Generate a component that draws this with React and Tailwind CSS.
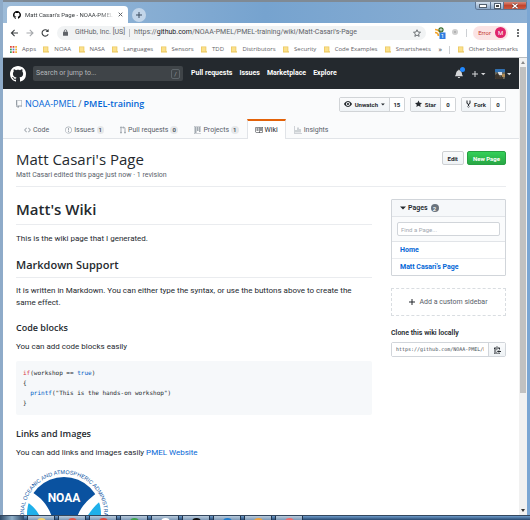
import React from "react";

const PATHS = {
  mark: [16, "M8 0C3.58 0 0 3.58 0 8c0 3.54 2.29 6.53 5.47 7.59.4.07.55-.17.55-.38 0-.19-.01-.82-.01-1.49-2.01.37-2.53-.49-2.69-.94-.09-.23-.48-.94-.82-1.13-.28-.15-.68-.52-.01-.53.63-.01 1.08.58 1.23.82.72 1.21 1.87.87 2.33.66.07-.52.28-.87.51-1.07-1.78-.2-3.64-.89-3.64-3.95 0-.87.31-1.59.82-2.15-.08-.2-.36-1.02.08-2.12 0 0 .67-.21 2.2.82.64-.18 1.32-.27 2-.27.68 0 1.36.09 2 .27 1.53-1.04 2.2-.82 2.2-.82.44 1.1.16 1.92.08 2.12.51.56.82 1.27.82 2.15 0 3.07-1.87 3.75-3.65 3.95.29.25.54.73.54 1.48 0 1.07-.01 1.93-.01 2.2 0 .21.15.46.55.38A8.013 8.013 0 0 0 16 8c0-4.42-3.58-8-8-8z"],
  star: [14, "M14 6l-4.9-.64L7 1 4.9 5.36 0 6l3.6 3.26L2.67 14 7 11.67 11.33 14l-.93-4.74L14 6z"],
  fork: [10, "M8 1a1.993 1.993 0 0 0-1 3.72V6L5 8 3 6V4.72A1.993 1.993 0 0 0 2 1a1.993 1.993 0 0 0-1 3.72V6.5l3 3v1.78A1.993 1.993 0 0 0 5 15a1.993 1.993 0 0 0 1-3.72V9.5l3-3V4.72A1.993 1.993 0 0 0 8 1zM2 4.2C1.34 4.2.8 3.65.8 3c0-.65.55-1.2 1.2-1.2.65 0 1.2.55 1.2 1.2 0 .65-.55 1.2-1.2 1.2zm3 10c-.66 0-1.2-.55-1.2-1.2 0-.65.55-1.2 1.2-1.2.65 0 1.2.55 1.2 1.2 0 .65-.55 1.2-1.2 1.2zm3-10c-.66 0-1.2-.55-1.2-1.2 0-.65.55-1.2 1.2-1.2.65 0 1.2.55 1.2 1.2 0 .65-.55 1.2-1.2 1.2z"],
  code: [14, "M9.5 3L8 4.5 11.5 8 8 11.5 9.5 13 14 8 9.5 3zm-5 0L0 8l4.5 5L6 11.5 2.5 8 6 4.5 4.5 3z"],
  issue: [14, "M7 2.3c3.14 0 5.7 2.56 5.7 5.7s-2.56 5.7-5.7 5.7A5.71 5.71 0 0 1 1.3 8c0-3.14 2.56-5.7 5.7-5.7zM7 1C3.14 1 0 4.14 0 8s3.14 7 7 7 7-3.14 7-7-3.14-7-7-7zm1 3H6v5h2V4zm0 6H6v2h2v-2z"],
  pull: [12, "M11 11.28V5c-.03-.78-.34-1.47-.94-2.06C9.46 2.35 8.78 2.03 8 2H7V0L4 3l3 3V4h1c.27.02.48.11.69.31.21.2.3.42.31.69v6.28A1.993 1.993 0 0 0 10 15a1.993 1.993 0 0 0 1-3.72zM4 3c0-1.11-.89-2-2-2a1.993 1.993 0 0 0-1 3.72v6.56A1.993 1.993 0 0 0 2 15a1.993 1.993 0 0 0 1-3.72V4.72c.59-.34 1-.98 1-1.72z"],
  project: [15, "M10 12h3V2h-3v10zm-4-2h3V2H6v8zm-4 4h3V2H2v12zm-1 1h13V1H1v14zM14 0H1a1 1 0 0 0-1 1v14a1 1 0 0 0 1 1h13a1 1 0 0 0 1-1V1a1 1 0 0 0-1-1z"],
  book: [16, "M3 5h4v1H3V5zm0 3h4V7H3v1zm0 2h4V9H3v1zm11-5h-4v1h4V5zm0 2h-4v1h4V7zm0 2h-4v1h4V9zm2-6v9c0 .55-.45 1-1 1H9.5l-1 1-1-1H2c-.55 0-1-.45-1-1V3c0-.55.45-1 1-1h5.5l1 1 1-1H15c.55 0 1 .45 1 1zm-8 .5L7.5 3H2v9h6V3.5zm7-.5H9.5l-.5.5V12h6V3z"],
  graph: [16, "M16 14v1H0V0h1v14h15zM5 13H3V8h2v5zm4 0H7V3h2v10zm4 0h-2V6h2v7z"],
  eye: [16, "M8.06 2C3 2 0 8 0 8s3 6 8.06 6C13 14 16 8 16 8s-3-6-7.94-6zM8 12c-2.2 0-4-1.78-4-4 0-2.2 1.8-4 4-4 2.22 0 4 1.8 4 4 0 2.22-1.78 4-4 4zm2-4c0 1.11-.89 2-2 2-1.11 0-2-.89-2-2 0-1.11.89-2 2-2 1.11 0 2 .89 2 2z"],
  repo: [12, "M4 9H3V8h1v1zm0-3H3v1h1V6zm0-2H3v1h1V4zm0-2H3v1h1V2zm8-1v12c0 .55-.45 1-1 1H6v2l-1.5-1.5L3 16v-2H1c-.55 0-1-.45-1-1V1c0-.55.45-1 1-1h10c.55 0 1 .45 1 1zm-1 10H1v2h2v-1h3v1h5v-2zm0-10H2v9h9V1z"],
  clippy: [14, "M2 13h4v1H2v-1zm5-6H2v1h5V7zm2 3V8l-3 3 3 3v-2h5v-2H9zM4.5 9H2v1h2.5V9zM2 12h2.5v-1H2v1zm9 1h1v2c-.02.28-.11.52-.3.7-.19.18-.42.28-.7.3H1c-.55 0-1-.45-1-1V4c0-.55.45-1 1-1h3c0-1.11.89-2 2-2 1.11 0 2 .89 2 2h3c.55 0 1 .45 1 1v5h-1V6H1v9h10v-2zM2 5h8c0-.55-.45-1-1-1H8c-.55 0-1-.45-1-1s-.45-1-1-1-1 .45-1 1-.45 1-1 1H3c-.55 0-1 .45-1 1z"],
  bell: [14, "M14 12v1H0v-1l.73-.58c.77-.77.81-2.55 1.19-4.42C2.69 3.23 6 2 6 2c0-.55.45-1 1-1s1 .45 1 1c0 0 3.39 1.23 4.16 5 .38 1.88.42 3.66 1.19 4.42l.66.58H14zm-7 4c1.11 0 2-.89 2-2H5c0 1.11.89 2 2 2z"],
  plus: [12, "M12 9H7v5H5V9H0V7h5V2h2v5h5v2z"],
  caret: [12, "M0 5l6 6 6-6z"],
};

function Octicon({ name, className = "h-2" }) {
  const [width, d] = PATHS[name];
  return (
    <svg viewBox={`0 0 ${width} 16`} className={`shrink-0 w-auto ${className}`} fill="currentColor" aria-hidden="true">
      <path fillRule="evenodd" d={d} />
    </svg>
  );
}

function WindowControls() {
  return (
    <div className="flex h-[8px] w-[52px] overflow-hidden rounded-b-[3px] border border-t-0 border-[#5d7593]">
      <button aria-label="Minimize" className="flex w-[15px] items-end justify-center border-r border-[#5d7593] bg-linear-to-b from-[#d3e0ee] to-[#8ba7c6] pb-[2px]">
        <span className="h-[2px] w-[6px] bg-white outline outline-[#52606f]" />
      </button>
      <button aria-label="Restore" className="flex w-[13px] items-center justify-center border-r border-[#5d7593] bg-linear-to-b from-[#d3e0ee] to-[#8ba7c6]">
        <span className="h-[4px] w-[5px] border border-white bg-[#444] outline outline-[#52606f]" />
      </button>
      <button aria-label="Close" className="flex grow items-center justify-center bg-linear-to-b from-[#d78b7b] via-[#c2442c] to-[#c75842]">
        <svg viewBox="0 0 8 6" className="h-[6px] w-[8px]">
          <path d="M1.5 .8l5 4.4M6.5 .8l-5 4.4" stroke="#5b2a26" strokeWidth="2.4" />
          <path d="M1.5 .8l5 4.4M6.5 .8l-5 4.4" stroke="#fff" strokeWidth="1.4" />
        </svg>
      </button>
    </div>
  );
}

function TitleBar() {
  return (
    <div className="flex h-[23px] shrink-0 items-start justify-between border-t-2 border-[#7f8a95] bg-linear-to-r from-[#9dbbd8] via-[#76a3cf] to-[#8db0d4] pl-[4px]">
      <div className="flex h-full items-end">
        <div className="flex h-[17px] w-[121px] items-center gap-[4px] rounded-t-[4px] bg-white pr-[5px] pl-[6px] text-[6px] text-[#3c4043]">
          <Octicon name="mark" className="h-[8px] text-black" />
          <span className="min-w-0 grow whitespace-nowrap mask-r-from-85%">Matt Casari's Page - NOAA-PMEL</span>
          <svg viewBox="0 0 6 6" className="h-[5px] w-[5px] shrink-0">
            <path d="M.8.8l4.4 4.4M5.2.8L.8 5.2" stroke="#5f6368" strokeWidth="1.2" />
          </svg>
        </div>
        <button aria-label="New tab" className="mb-px ml-[4px] flex size-[14px] items-center justify-center rounded-full bg-[#c3d6ea] text-[#3c4d60]">
          <Octicon name="plus" className="h-[8px]" />
        </button>
      </div>
      <WindowControls />
    </div>
  );
}

function Toolbar() {
  return (
    <div className="flex h-[19px] shrink-0 items-center bg-white pr-[8px] pl-[7px] text-[7px] text-[#5f6368]">
      <svg viewBox="0 0 40 10" className="mr-[7px] h-[10px] w-[40px] shrink-0" fill="none" strokeWidth="1.1">
        <path d="M8 5H1.5M4.6 1.8L1.4 5l3.2 3.2" stroke="#3c4043" />
        <path d="M16.500 5H23M19.800 1.800L23 5l-3.200 3.200" stroke="#a5a8ac" />
        <path d="M38 3.200A3.200 3.200 0 1 0 38.200 6.200" stroke="#3c4043" />
        <path d="M38.600 1v3h-3z" fill="#3c4043" />
      </svg>
      <div className="flex h-[14px] grow items-center rounded-full bg-[#f1f3f4] pr-[5px] pl-[6px] whitespace-nowrap">
        <svg viewBox="0 0 6 8" className="mr-[7px] h-[7px] w-[5px]">
          <path d="M1.500 4V2.200a1.500 1.500 0 0 1 3 0V4" stroke="#5f6368" fill="none" />
          <rect y="3" width="6" height="5" rx=".6" fill="#5f6368" />
        </svg>
        <span>GitHub, Inc. [US]</span>
        <span className="mx-[4px] h-[8px] w-px bg-[#bdc1c6]" />
        <span>https://<span className="text-[#202124]">github.com</span>/NOAA-PMEL/PMEL-training/wiki/Matt-Casari's-Page</span>
        <svg viewBox="0 0 16 16" className="ml-auto h-[8px] w-[8px]" fill="none" stroke="#5f6368" strokeWidth="1.800">
          <path d="M8 1.500l2 4.500 5 .5-3.800 3.300 1.100 4.900L8 12.200l-4.300 2.500 1.100-4.900L1 6.500 6 6z" />
        </svg>
      </div>
      <svg viewBox="0 0 26 12" className="ml-[8px] h-[12px] w-[26px] shrink-0">
        <path d="M1 2.500a6 6 0 0 1 6 6.500M1 5.500a3.500 3.500 0 0 1 3.400 3.500" stroke="#f3a52c" strokeWidth="1.700" fill="none" />
        <circle cx="7" cy="2.800" r="2.600" fill="#356a2c" />
        <path d="M7 1.200v3.200M5.400 2.800h3.200" stroke="#fff" strokeWidth=".8" />
        <rect x="5.500" y="5.500" width="6" height="6.500" fill="#2f7de1" />
        <text x="8.500" y="11" fontSize="6" textAnchor="middle" fill="#fff">1</text>
        <circle cx="21" cy="5" r="3" fill="#d0d0d0" />
        <circle cx="21" cy="5" r="1" fill="#aaa" />
      </svg>
      <span className="mx-[6px] h-[8px] w-px bg-[#cdd0d4]" />
      <button className="flex h-[14px] items-center gap-[4px] rounded-full bg-[#fbe3e4] pr-[2px] pl-[5px] text-[6px] text-[#c5352f]">
        Error
        <span className="flex size-[11px] items-center justify-center rounded-full bg-[#e0256b] text-[6px] text-white">M</span>
      </button>
      <button aria-label="Menu" className="ml-[9px] flex flex-col gap-px">
        <span className="size-[2px] rounded-full bg-[#3c4043]" />
        <span className="size-[2px] rounded-full bg-[#3c4043]" />
        <span className="size-[2px] rounded-full bg-[#3c4043]" />
      </button>
    </div>
  );
}

function Folder() {
  return (
    <svg viewBox="0 0 7 7" className="h-[7px] w-[6px] shrink-0">
      <path d="M0 0h6.200v5L7 6v1H0z" fill="#e9c55a" />
      <path d="M.8.8h4.600v5H.8z" fill="#fbe08a" />
    </svg>
  );
}

const BOOKMARKS = ["NOAA", "NASA", "Languages", "Sensors", "TDD", "Distributors", "Security", "Code Examples", "Smartsheets"];
const DOTS = ["#e0453a", "#e0453a", "#f0b23a", "#3f9b53", "#4a86e8", "#f0b23a", "#3f9b53", "#e0453a", "#f0b23a"];

function BookmarksBar() {
  return (
    <div className="flex h-[16px] shrink-0 items-center justify-between border-b border-[#b9bcbf] bg-white pr-[9px] pl-[7px] text-[6px] whitespace-nowrap text-[#5f6368]">
      <a href="#apps" className="flex items-center gap-[5px] font-['Open_Sans',sans-serif]">
        <svg viewBox="0 0 8 8" className="size-[7px]">
          {DOTS.map((fill, i) => (
            <rect key={i} x={(i % 3) * 3} y={Math.floor(i / 3) * 3} width="2" height="2" fill={fill} />
          ))}
        </svg>
        Apps
      </a>
      {BOOKMARKS.map((name) => (
        <a key={name} href="#bookmark" className="flex items-center gap-[5px] font-['Open_Sans',sans-serif]">
          <Folder />
          {name}
        </a>
      ))}
      <button aria-label="More bookmarks" className="text-[8px]">»</button>
      <span className="h-[8px] w-px bg-[#cdd0d4]" />
      <a href="#other" className="flex items-center gap-[5px] font-['Open_Sans',sans-serif]">
        <Folder />
        Other bookmarks
      </a>
    </div>
  );
}

function SiteHeader() {
  return (
    <header className="flex h-[31px] shrink-0 items-center bg-[#24292e] pr-[8px] pl-[7px] text-[7px] font-bold text-white">
      <a href="#home" aria-label="Homepage">
        <Octicon name="mark" className="h-[16px]" />
      </a>
      <label className="mr-[8px] ml-[7px] flex h-[15px] w-[150px] items-center rounded-[2px] bg-[#3f4448] px-[3px]">
        <input aria-label="Search" placeholder="Search or jump to..." className="min-w-0 grow bg-transparent font-normal outline-none placeholder:text-[#b4b7b9]" />
        <span className="flex h-[10px] w-[9px] items-center justify-center rounded-[2px] border border-[#5f666b] text-[6px] font-normal text-[#a0a4a8]">/</span>
      </label>
      <nav className="flex gap-[7px] whitespace-nowrap">
        <a href="#pulls">Pull requests</a>
        <a href="#issues">Issues</a>
        <a href="#marketplace">Marketplace</a>
        <a href="#explore">Explore</a>
      </nav>
      <div className="ml-auto flex items-center text-[#d5d7d9]">
        <button aria-label="Notifications" className="relative mr-[9px]">
          <Octicon name="bell" className="h-[9px]" />
          <span className="absolute -top-[2px] -right-[2px] size-[5px] rounded-full bg-[#2188ff]" />
        </button>
        <button aria-label="Create new" className="mr-[9px] flex items-center gap-[3px]">
          <Octicon name="plus" className="h-[8px]" />
          <Octicon name="caret" className="h-[6px]" />
        </button>
        <button aria-label="Profile" className="flex items-center gap-[2px]">
          <svg viewBox="0 0 10 10" className="size-[10px] rounded-[1px]">
            <path d="M0 0h10v10H0z" fill="#6c6a5c" />
            <path d="M0 0h10v3L5 4 0 3z" fill="#2f6fb0" />
            <path d="M3 3h4v3H3z" fill="#d9dcdf" />
            <path d="M0 6l3-2 2 4 3-2v4H0z" fill="#3c352c" />
            <path d="M7 5h3v3H7z" fill="#b08a54" />
          </svg>
          <Octicon name="caret" className="h-[6px]" />
        </button>
      </div>
    </header>
  );
}

function SocialButton({ icon, label, count, caret }) {
  return (
    <li className="flex h-[15px] rounded-[2px] border border-[#d1d4d7] text-[6px] font-bold text-[#24292e]">
      <button className="flex items-center gap-[3px] bg-linear-to-b from-[#fafbfc] to-[#eff3f6] px-[4px]">
        <Octicon name={icon} />
        {label}
        {caret && <Octicon name="caret" className="h-[5px]" />}
      </button>
      <a href="#count" className="flex w-[15px] items-center justify-center border-l border-[#d1d4d7] bg-white">{count}</a>
    </li>
  );
}

function Tab({ icon, label, count, active }) {
  const base = "flex h-[20px] items-center gap-[2px] border-x border-t-2 px-[7px] ";
  return (
    <a
      href="#tab"
      className={base + (active ? "border-x-[#e1e4e8] border-t-[#e36209] bg-white text-[#24292e]" : "border-transparent text-[#586069]")}
    >
      <Octicon name={icon} className={active ? "h-[8px] text-[#24292e]" : "h-[8px] text-[#a3aab1]"} />
      {label}
      {count && <span className="rounded-full bg-[#e6e8ea] px-[2px] text-[6px] leading-[8px] font-semibold text-[#444d56]">{count}</span>}
    </a>
  );
}

function RepoHead() {
  return (
    <div className="h-[50px] shrink-0 border-b border-[#e1e4e8] bg-[#fafbfc] px-[13px]">
      <div className="flex h-[30px] items-center justify-between">
        <h1 className="flex items-center gap-[2px] font-['Open_Sans',sans-serif] text-[9px] whitespace-nowrap text-[#586069]">
          <Octicon name="repo" className="mr-px h-[8px] text-[#959da5]" />
          <a href="#owner" className="text-[#0366d6]">NOAA-PMEL</a>
          <span>/</span>
          <a href="#repo" className="font-semibold text-[#0366d6]">PMEL-training</a>
        </h1>
        <ul className="flex gap-[5px]">
          <SocialButton icon="eye" label="Unwatch" count="15" caret />
          <SocialButton icon="star" label="Star" count="0" />
          <SocialButton icon="fork" label="Fork" count="0" />
        </ul>
      </div>
      <nav className="flex text-[7px] whitespace-nowrap">
        <Tab icon="code" label="Code" />
        <Tab icon="issue" label="Issues" count="1" />
        <Tab icon="pull" label="Pull requests" count="0" />
        <Tab icon="project" label="Projects" count="1" />
        <Tab icon="book" label="Wiki" active />
        <Tab icon="graph" label="Insights" />
      </nav>
    </div>
  );
}

function NoaaLogo() {
  return (
    <svg viewBox="0 0 92 92" className="mt-[10px] ml-[2px] size-[92px]" role="img" aria-label="NOAA logo">
      <defs>
        <clipPath id="disk"><circle cx="46" cy="45" r="37" /></clipPath>
        <path id="ring" d="M46 85a40 40 0 1 1 .1 0" />
      </defs>
      <g clipPath="url(#disk)">
        <path d="M0 0h92v92H0z" fill="#fff" />
        <path d="M0 30c14 3 20 12 25 24v38H0z" fill="#1fb0ea" />
        <path d="M92 26c-12 6-22 17-27 30v36h27z" fill="#1fb0ea" />
        <path d="M12 22c10 6 17 12 22 26l4 10h18c4-16 9-24 23-34L70 0H20z" fill="#0a52a0" />
      </g>
      <text x="46" y="33" textAnchor="middle" fontSize="12" fontWeight="700" fill="#fff" fontFamily="Roboto, sans-serif">NOAA</text>
      <text fontSize="5.5" fill="#0a52a0" fontFamily="'Liberation Sans', sans-serif">
        <textPath href="#ring" startOffset="50%" textAnchor="middle">NATIONAL OCEANIC AND ATMOSPHERIC ADMINISTRATION</textPath>
      </text>
    </svg>
  );
}

const HEADING = "font-['Open_Sans',sans-serif] font-semibold ";

function Article() {
  return (
    <article className="min-w-0 grow text-[8px] leading-[12px] text-[#24292e]">
      <h1 className={HEADING + "border-b border-[#eaecef] pb-[4px] text-[15px] leading-[21px]"}>Matt's Wiki</h1>
      <p className="mt-[8px]">This is the wiki page that I generated.</p>
      <h2 className={HEADING + "mt-[12px] border-b border-[#eaecef] pb-[4px] text-[11px] leading-[16px]"}>Markdown Support</h2>
      <p className="mt-[7px]">It is written in Markdown. You can either type the syntax, or use the buttons above to create the same effect.</p>
      <h3 className={HEADING + "mt-[12px] text-[9px] leading-[13px]"}>Code blocks</h3>
      <p className="mt-[7px]">You can add code blocks easily</p>
      <pre className="mt-[8px] rounded-[2px] bg-[#f6f8fa] p-[7px] font-['DejaVu_Sans_Mono',monospace] text-[6px] leading-[10px]">
        <code className="font-['DejaVu_Sans_Mono',monospace]">
          <span className="text-[#d73a49]">if</span>(workshop == <span className="text-[#005cc5]">true</span>){"\n{\n  "}
          <span className="text-[#005cc5]">printf</span>("This is the hands-on workshop"){"\n}"}
        </code>
      </pre>
      <h3 className={HEADING + "mt-[12px] text-[9px] leading-[13px]"}>Links and Images</h3>
      <p className="mt-[7px]">You can add links and images easily <a href="#pmel" className="text-[#0366d6]">PMEL Website</a></p>
      <NoaaLogo />
    </article>
  );
}

function Sidebar() {
  return (
    <aside className="w-[115px] shrink-0 text-[7px] text-[#24292e]">
      <section className="rounded-[1px] border border-[#d1d5da]">
        <h2 className="flex h-[17px] items-center gap-[2px] border-b border-[#e1e4e8] bg-[#f6f8fa] px-[8px] font-semibold">
          <Octicon name="caret" className="h-[8px]" />
          Pages
          <span className="ml-px flex size-[8px] items-center justify-center rounded-full bg-[#6a737d] text-[6px] text-white">2</span>
        </h2>
        <div className="border-b border-[#e1e4e8] bg-[#fafbfc] p-[5px]">
          <input aria-label="Find a Page" placeholder="Find a Page..." className="block h-[14px] w-full rounded-[2px] border border-[#d1d5da] bg-white px-[3px] text-[6px] outline-none placeholder:text-[#a3a9b0]" />
        </div>
        <ul className="font-bold text-[#0366d6]">
          <li className="flex h-[17px] items-center border-b border-[#eaecef] px-[8px]"><a href="#home-page">Home</a></li>
          <li className="flex h-[16px] items-center px-[8px]"><a href="#matt">Matt Casari's Page</a></li>
        </ul>
      </section>
      <a href="#sidebar" className="mt-[12px] flex h-[28px] items-center justify-center gap-[4px] border border-dashed border-[#d9dde1] text-[#586069]">
        <Octicon name="plus" className="h-[8px] text-[#24292e]" />
        Add a custom sidebar
      </a>
      <label htmlFor="clone" className="mt-[12px] block leading-[10px] font-semibold">Clone this wiki locally</label>
      <div className="mt-[4px] flex h-[15px] rounded-[2px] border border-[#d1d5da]">
        <input id="clone" readOnly value="https://github.com/NOAA-PMEL/PMEL-training.wiki.git" className="min-w-0 grow bg-white px-[4px] font-['DejaVu_Sans_Mono',monospace] text-[5px] text-[#444d56] outline-none" />
        <button aria-label="Copy" className="flex w-[17px] shrink-0 items-center justify-center border-l border-[#d1d5da] bg-linear-to-b from-[#fafbfc] to-[#eff3f6]">
          <Octicon name="clippy" />
        </button>
      </div>
    </aside>
  );
}

function WikiPage() {
  return (
    <main className="bg-white px-[13px] pt-[9px]">
      <div className="flex items-start justify-between border-b border-[#eaecef] pb-[6px]">
        <div>
          <h1 className="font-['Open_Sans',sans-serif] text-[15px] leading-[22px] text-[#24292e]">Matt Casari's Page</h1>
          <p className="text-[7px] leading-[10px] text-[#586069]">Matt Casari edited this page just now · 1 revision</p>
        </div>
        <div className="mt-[3px] flex gap-[3px] text-[6px] font-bold">
          <button className="h-[14px] rounded-[2px] border border-[#cdd0d3] bg-linear-to-b from-[#fafbfc] to-[#eff3f6] px-[5px] text-[#24292e]">Edit</button>
          <button className="h-[14px] rounded-[2px] border border-[#28a043] bg-linear-to-b from-[#34d058] to-[#28a745] px-[5px] text-white">New Page</button>
        </div>
      </div>
      <div className="mt-[12px] flex gap-[19px]">
        <Article />
        <Sidebar />
      </div>
    </main>
  );
}

function Scrollbar() {
  return (
    <div className="flex w-[8px] shrink-0 flex-col items-center bg-[#f1f1f1] py-[3px]" aria-hidden="true">
      <span className="border-x-2 border-b-3 border-x-transparent border-b-[#8a8a8a]" />
      <span className="mt-[3px] h-[326px] w-[6px] bg-[#c1c1c1]" />
      <span className="mt-auto border-x-2 border-t-3 border-x-transparent border-t-[#333]" />
    </div>
  );
}

const TASKS = ["#f3d36a", "#e2574c", "#e04a3f", "#3fa34d", "#ffffff", "#111111", "#1f7fd1", "#f0a23c", "#f26d6d"];

function Taskbar() {
  return (
    <footer className="flex h-[5px] shrink-0 gap-[3px] overflow-hidden border-t border-[#34475e] bg-linear-to-b from-[#6f9dcc] to-[#27486f]">
      <span className="w-[24px] bg-linear-to-r from-[#2d4866] via-[#8fb0c9] to-[#2d4866]" />
      {TASKS.map((color, i) => (
        <button key={i} aria-label={`Task ${i + 1}`} className="flex w-[28px] justify-center border-x border-[#20344d] bg-linear-to-b from-[#b9cbdc] to-[#7e9ab8] pt-[2px]">
          <span className="h-[4px] w-[9px] rounded-t-full" style={{ backgroundColor: color }} />
        </button>
      ))}
    </footer>
  );
}

export default function App() {
  return (
    <div className="flex h-screen flex-col overflow-hidden bg-white font-['Roboto',sans-serif]">
      <div className="flex min-h-0 grow flex-col border-r-3 border-l-3 border-r-[#7ba6d3] border-l-[#8eabc9]">
        <TitleBar />
        <Toolbar />
        <BookmarksBar />
        <div className="flex min-h-0 grow">
          <div className="flex min-w-0 grow flex-col overflow-hidden">
            <SiteHeader />
            <RepoHead />
            <WikiPage />
          </div>
          <Scrollbar />
        </div>
      </div>
      <Taskbar />
    </div>
  );
}
